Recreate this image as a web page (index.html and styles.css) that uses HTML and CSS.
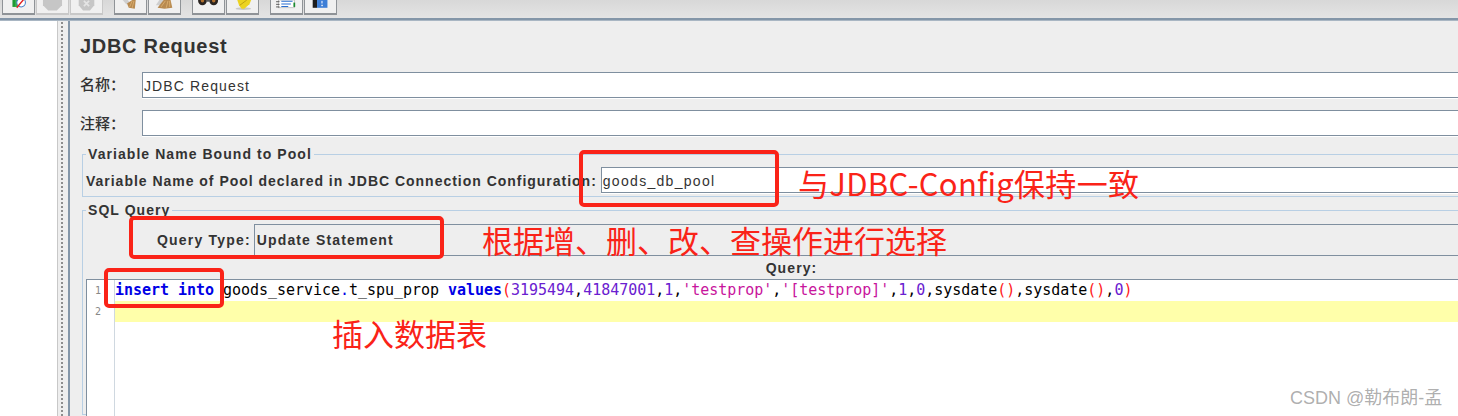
FILE: index.html
```html
<!DOCTYPE html>
<html lang="zh">
<head>
<meta charset="utf-8">
<title>JDBC Request</title>
<link rel="stylesheet" href="styles.css">
</head>
<body>
<div class="toolbar">
  <div class="group">
    <div class="tbtn"><svg viewBox="0 0 32 15" class="ico"><path d="M9 0h6v8H9z" fill="#1f9a35"/><path d="M12 0h3v8h-3z" fill="#35b04a"/><circle cx="19" cy="3" r="5" fill="#fff" stroke="#4a80c8" stroke-width="1.2"/><path d="M14 9L23 -2" stroke="#e02020" stroke-width="1.6"/></svg></div>
    <div class="tbtn off"><svg viewBox="0 0 32 15" class="ico"><path d="M5 0h22v6l-6 6H11l-6-6z" fill="#c6c6c6"/></svg></div>
    <div class="tbtn off"><svg viewBox="0 0 32 15" class="ico"><path d="M7 0h18v6l-5 6h-8l-5-6z" fill="#c6c6c6"/><path d="M13 1l6 6M19 1l-6 6" stroke="#e4e4e4" stroke-width="2"/></svg></div>
  </div>
  <div class="group">
    <div class="tbtn"><svg viewBox="0 0 32 15" class="ico"><path d="M7 0h6l3 4-5 1z" fill="#cfcfcf"/><path d="M12 4l6-4h4l-1 10-7-1z" fill="#b88a50"/><path d="M15 8l3-7M18 9l2-8" stroke="#dcb070"/></svg></div>
    <div class="tbtn"><svg viewBox="0 0 32 15" class="ico"><path d="M6 6l4-6h5l-3 6z" fill="#cfcfcf"/><path d="M8 9l7-9h8l2 9-9 1z" fill="#b88a50"/><path d="M12 8l5-7M18 9l2-8M22 8l0-7" stroke="#dcb070"/></svg></div>
  </div>
  <div class="group">
    <div class="tbtn"><svg viewBox="0 0 32 15" class="ico"><circle cx="9" cy="1" r="5" fill="#2a2420"/><circle cx="22" cy="1" r="5" fill="#2a2420"/><rect x="13" y="0" width="5" height="2" fill="#555"/><circle cx="9" cy="1" r="2" fill="#b0702f"/><circle cx="22" cy="1" r="2" fill="#b0702f"/></svg></div>
    <div class="tbtn"><svg viewBox="0 0 32 15" class="ico"><ellipse cx="17" cy="10" rx="9" ry="1.5" fill="#c8c8c8"/><path d="M10 0h16l-2 5-6 5-3 0-3-4z" fill="#ecd320"/><path d="M13 6l8-6" stroke="#b89c10"/></svg></div>
  </div>
  <div class="group">
    <div class="tbtn"><svg viewBox="0 0 32 15" class="ico"><rect x="7" y="0" width="18" height="9" fill="#fff" stroke="#999" stroke-width=".6"/><path d="M10 1.500h13M10 4.500h11M10 7.500h8" stroke="#2a6fd0" stroke-width="1.200"/><rect x="24" y="3" width="2" height="5" fill="#1c8a30"/><path d="M4 2h4M4 5h4M4 8h4" stroke="#444"/></svg></div>
    <div class="tbtn"><svg viewBox="0 0 32 15" class="ico"><rect x="7" y="0" width="5" height="9" fill="#1d1d1d"/><rect x="12" y="0" width="12" height="9" fill="#3d7ed6"/><rect x="17" y="1" width="1.400" height="3" fill="#dce8ff"/><rect x="17" y="5.500" width="1.600" height="1.600" fill="#fff"/></svg></div>
  </div>
</div>
<div class="rule"></div>
<main class="main">
  <div class="tree"></div>
  <div class="divider"></div>
  <section class="panel">
    <h1 class="title">JDBC Request</h1>
    <div class="row">
      <label class="cjk">名称：</label>
      <div class="input">JDBC Request</div>
    </div>
    <div class="row row-second">
      <label class="cjk">注释：</label>
      <div class="input"></div>
    </div>
    <fieldset class="box box-pool">
      <legend class="legend">Variable Name Bound to Pool</legend>
      <div class="pool-row">
        <span class="pool-label">Variable Name of Pool declared in JDBC Connection Configuration:</span>
        <div class="input pool-input">goods_db_pool</div>
      </div>
    </fieldset>
    <fieldset class="box box-sql">
      <legend class="legend legend-sql">SQL Query</legend>
      <div class="type-row">
        <span class="type-label">Query Type:</span>
        <div class="combo">Update Statement</div>
      </div>
      <div class="query-label">Query:</div>
      <div class="editor">
        <div class="gutter"><div class="ln">1</div><div class="ln">2</div></div>
        <div class="code">
          <div class="line"><b class="kw">insert into</b> goods_service<span class="dot">.</span>t_spu_prop <b class="kw">values</b><span class="par">(</span><span class="num">3195494</span>,<span class="num">41847001</span>,<span class="num">1</span>,<span class="str">'testprop'</span>,<span class="str">'[testprop]'</span>,<span class="num">1</span>,<span class="num">0</span>,sysdate<span class="par">()</span>,sysdate<span class="par">()</span>,<span class="num">0</span><span class="par">)</span></div>
          <div class="line current"></div>
        </div>
      </div>
    </fieldset>
  </section>
</main>
<div class="mark mark-pool"></div>
<div class="mark mark-type"></div>
<div class="mark mark-insert"></div>
<div class="note note-pool">与JDBC-Config保持一致</div>
<div class="note note-type">根据增、删、改、查操作进行选择</div>
<div class="note note-insert">插入数据表</div>
<div class="watermark">CSDN @勒布朗-孟</div>
</body>
</html>
```
FILE: styles.css
```css
* { box-sizing: border-box; }
html, body { margin: 0; height: 416px; overflow: hidden; }
body {
  position: relative;
  background: #eeeeee;
  color: #333;
  font-family: "Liberation Sans", "Noto Sans CJK SC", sans-serif;
  display: flex;
  flex-direction: column;
}
.toolbar {
  height: 18px;
  flex: none;
  display: flex;
  gap: 11px;
  padding-left: 2px;
  background: linear-gradient(#d8d8d8, #e4e4e4);
}
.group { display: flex; gap: 1px; height: 15px; }
.tbtn {
  width: 33px;
  height: 15px;
  border: 1px solid #8f9397;
  border-top: 0;
  border-bottom-width: 2px;
  background: #f0f0f0;
}
.tbtn.off { border-color: #c8c8c8; }
.ico { display: block; width: 31px; height: 13px; overflow: hidden; }
.rule { height: 3px; flex: none; background: #8496a8; border-bottom: 1px solid #a9b6c3; }
.main { flex: 1; display: flex; min-height: 0; }
.tree { width: 58px; background: #fff; border-right: 1px solid #c8c8c8; }
.divider {
  width: 10px;
  background-color: #eee;
  background-image: radial-gradient(#8d8d8d 0.8px, transparent 1px);
  background-size: 4px 4px;
  background-position: 2px 0;
  background-repeat: repeat-y;
}
.panel {
  flex: 1;
  min-width: 0;
  border-left: 2px solid #8496a8;
  padding: 13px 0 0 10px;
  background: #eeeeee;
}
.title {
  margin: 0;
  font-size: 20px;
  line-height: 24px;
  font-weight: 700;
  color: #333;
  letter-spacing: 0.7px;
}
.row { display: flex; align-items: center; height: 26px; margin-top: 14px; }
.row-second { margin-top: 12px; }
.cjk { width: 62px; font-size: 15px; font-weight: 500; line-height: 24px; color: #333; flex: none; }
.row-second .cjk { padding-top: 2px; }
.input {
  flex: 1;
  height: 26px;
  background: #fff;
  border-top: 1px solid #7f8f9f;
  border-left: 1px solid #7f8f9f;
  border-bottom: 1px solid #7f8f9f;
  box-shadow: 0 1px 0 #fff;
  padding-left: 1px;
  font-size: 14px;
  line-height: 26px;
  letter-spacing: 1.12px;
  color: #333;
}
.box {
  margin: 0 0 0 2px;
  padding: 0;
  min-width: 0;
  border: 0;
  border-top: 1px solid #b8cfe4;
  border-left: 1px solid #b8cfe4;
  border-bottom: 1px solid #b8cfe4;
}
.box-pool { height: 50px; margin-top: 11px; }
.box-sql { margin-top: 6px; height: 212px; }
.legend {
  margin-left: 3px;
  padding: 0 2px;
  font-size: 14px;
  line-height: 14px;
  font-weight: 700;
  letter-spacing: 1.06px;
  color: #333;
}
.pool-row { display: flex; align-items: center; height: 26px; margin-top: 6px; padding-left: 3px; }
.pool-label { font-size: 14px; font-weight: 700; white-space: nowrap; letter-spacing: 0.98px; margin-right: 4px; padding-top: 2px; }
.pool-input { letter-spacing: 1.3px; padding-left: 1px; }
.type-row { display: flex; align-items: center; height: 32px; margin-top: 7px; padding-left: 74px; }
.type-label { font-size: 14px; font-weight: 700; letter-spacing: 1.2px; white-space: nowrap; margin-right: 3px; }
.combo {
  flex: 1;
  height: 32px;
  background: #eeeeee;
  border: 1px solid #7f8f9f;
  border-right: 0;
  padding-left: 2px;
  font-size: 14px;
  font-weight: 700;
  line-height: 30px;
  letter-spacing: 1.12px;
}
.query-label {
  height: 23px;
  line-height: 24px;
  text-align: center;
  font-size: 14px;
  font-weight: 700;
  letter-spacing: 1.1px;
  padding-left: 42px;
}
.editor { margin-left: 3px; height: 137px; display: flex; background: #fff; border-top: 1px solid #7f8f9f; border-left: 1px solid #7f8f9f; }
.gutter { width: 28px; flex: none; border-right: 1px solid #cfd8e0; text-align: right; padding-right: 13px; }
.ln { height: 21px; font-family: "DejaVu Sans Mono", monospace; font-size: 10px; line-height: 21px; color: #888; }
.code { flex: 1; min-width: 0; }
.line {
  height: 21px;
  font-family: "DejaVu Sans Mono", monospace;
  font-size: 15px;
  letter-spacing: -0.03px;
  line-height: 20px;
  color: #000;
  white-space: pre;
}
.current { background: #ffffaa; }
.kw { color: #0000e6; font-weight: 700; }
.num { color: #6a20d0; }
.str { color: #c8149c; }
.par { color: #ff1a1a; }
.dot { color: #0000e6; }
.mark {
  position: absolute;
  border: 4px solid #fa2318;
  border-radius: 5px;
}
.mark-pool { left: 579px; top: 150px; width: 200px; height: 57px; }
.mark-type { left: 129px; top: 216px; width: 315px; height: 43px; }
.mark-insert { left: 104px; top: 268px; width: 120px; height: 40px; }
.note {
  position: absolute;
  font-family: "Noto Sans CJK SC", sans-serif;
  font-size: 31px;
  line-height: 40px;
  color: #fa2318;
  white-space: nowrap;
}
.note-pool { left: 798px; top: 163px; letter-spacing: 0.3px; }
.note-type { left: 482px; top: 220px; }
.note-insert { left: 332px; top: 313px; }
.watermark {
  position: absolute;
  left: 1290px;
  top: 387px;
  font-family: "Liberation Sans", "Noto Sans CJK SC", sans-serif;
  font-size: 18px;
  line-height: 22px;
  color: rgba(130, 130, 130, 0.65);
  white-space: nowrap;
}
```
